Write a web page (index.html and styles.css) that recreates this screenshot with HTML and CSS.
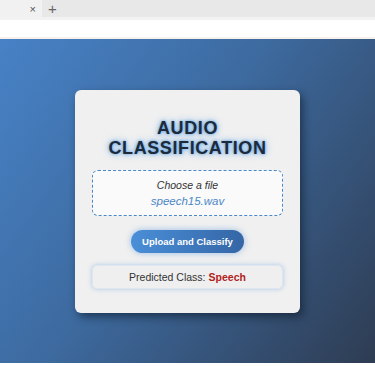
FILE: index.html
```html
<!DOCTYPE html>
<html lang="en">
<head>
  <meta charset="UTF-8">
  <meta name="viewport" content="width=device-width, initial-scale=1.0">
  <title>Audio Classification</title>
  <link rel="stylesheet" href="styles.css">
</head>
<body>
  <div class="tabbar">
    <div class="tab"><span class="tab-close">×</span></div>
    <span class="tab-new">+</span>
  </div>
  <div class="toolbar"></div>

  <main class="page">
    <div class="card">
      <h1>AUDIO<br>CLASSIFICATION</h1>
      <form class="upload">
        <label class="dropzone">
          <span class="choose">Choose a file</span>
          <span class="filename">speech15.wav</span>
        </label>
        <button type="button">Upload and Classify</button>
      </form>
      <div class="result"><span>Predicted Class:</span><strong>Speech</strong></div>
    </div>
  </main>
  <div class="bottom"></div>
</body>
</html>
```

FILE: styles.css
```css
html, body {
  margin: 0;
  height: 100%;
}
body {
  font-family: "Liberation Sans", Arial, sans-serif;
  background: #fff;
  display: flex;
  flex-direction: column;
  overflow: hidden;
}
.tabbar {
  height: 17px;
  background: #e8e8e8;
  display: flex;
  align-items: center;
  border-bottom: 3px solid #f2f2f2;
}
.tab {
  width: 42px;
  height: 17px;
  background: #f1f1f1;
  display: flex;
  align-items: center;
  justify-content: flex-end;
}
.tab-close {
  font-size: 11px;
  color: #555;
  margin-right: 6px;
}
.tab-new {
  font-size: 15px;
  color: #666;
  margin-left: 6px;
  line-height: 1;
}
.toolbar {
  height: 17px;
  background: #fff;
  border-bottom: 2px solid #f6f1ea;
}
.page {
  height: 324px;
  background: linear-gradient(125deg, #4782c6 0%, #3d6a9f 45%, #2e3c52 100%);
  display: flex;
  justify-content: center;
  align-items: flex-start;
}
.card {
  margin-top: 51px;
  width: 225px;
  height: 223px;
  box-sizing: border-box;
  background: #f0f0f0;
  border-radius: 6px;
  box-shadow: 3px 4px 8px rgba(10, 20, 35, 0.55);
  padding: 28px 17px 0;
  display: flex;
  flex-direction: column;
  align-items: center;
}
h1 {
  margin: 0;
  font-size: 18px;
  line-height: 20px;
  letter-spacing: 0.6px;
  font-weight: bold;
  text-align: center;
  color: #1f2a38;
  text-shadow: 0 0 3px rgba(70, 150, 230, 0.9), 0 0 7px rgba(70, 150, 230, 0.7);
}
.upload {
  width: 100%;
  display: flex;
  flex-direction: column;
  align-items: center;
}
.dropzone {
  margin-top: 12px;
  width: 100%;
  height: 46px;
  box-sizing: border-box;
  border: 1.5px dashed #4a88cc;
  border-radius: 6px;
  background: #fafafa;
  display: flex;
  flex-direction: column;
  align-items: center;
  justify-content: center;
  font-style: italic;
}
.choose {
  font-size: 10.5px;
  color: #333;
  line-height: 15px;
}
.filename {
  font-size: 11.5px;
  color: #4a86c8;
  line-height: 16px;
}
button {
  margin-top: 14px;
  width: 113px;
  height: 23px;
  padding: 0;
  border: none;
  border-radius: 12px;
  background: linear-gradient(to right, #4a8fd8, #3566a6);
  color: #fff;
  font-family: inherit;
  font-size: 9.5px;
  font-weight: bold;
  white-space: nowrap;
  box-shadow: 0 0 6px rgba(70, 140, 220, 0.5);
  cursor: pointer;
}
.result {
  margin-top: 12px;
  width: 100%;
  height: 24px;
  box-sizing: border-box;
  background: #efefef;
  border: 1px solid #dfe6ef;
  border-radius: 5px;
  box-shadow: 0 0 5px rgba(90, 150, 220, 0.45);
  display: flex;
  align-items: center;
  justify-content: center;
  gap: 3px;
  font-size: 10.5px;
  color: #333;
}
.result strong {
  color: #b22222;
}
.bottom {
  flex: 1;
  background: #fff;
}
```
